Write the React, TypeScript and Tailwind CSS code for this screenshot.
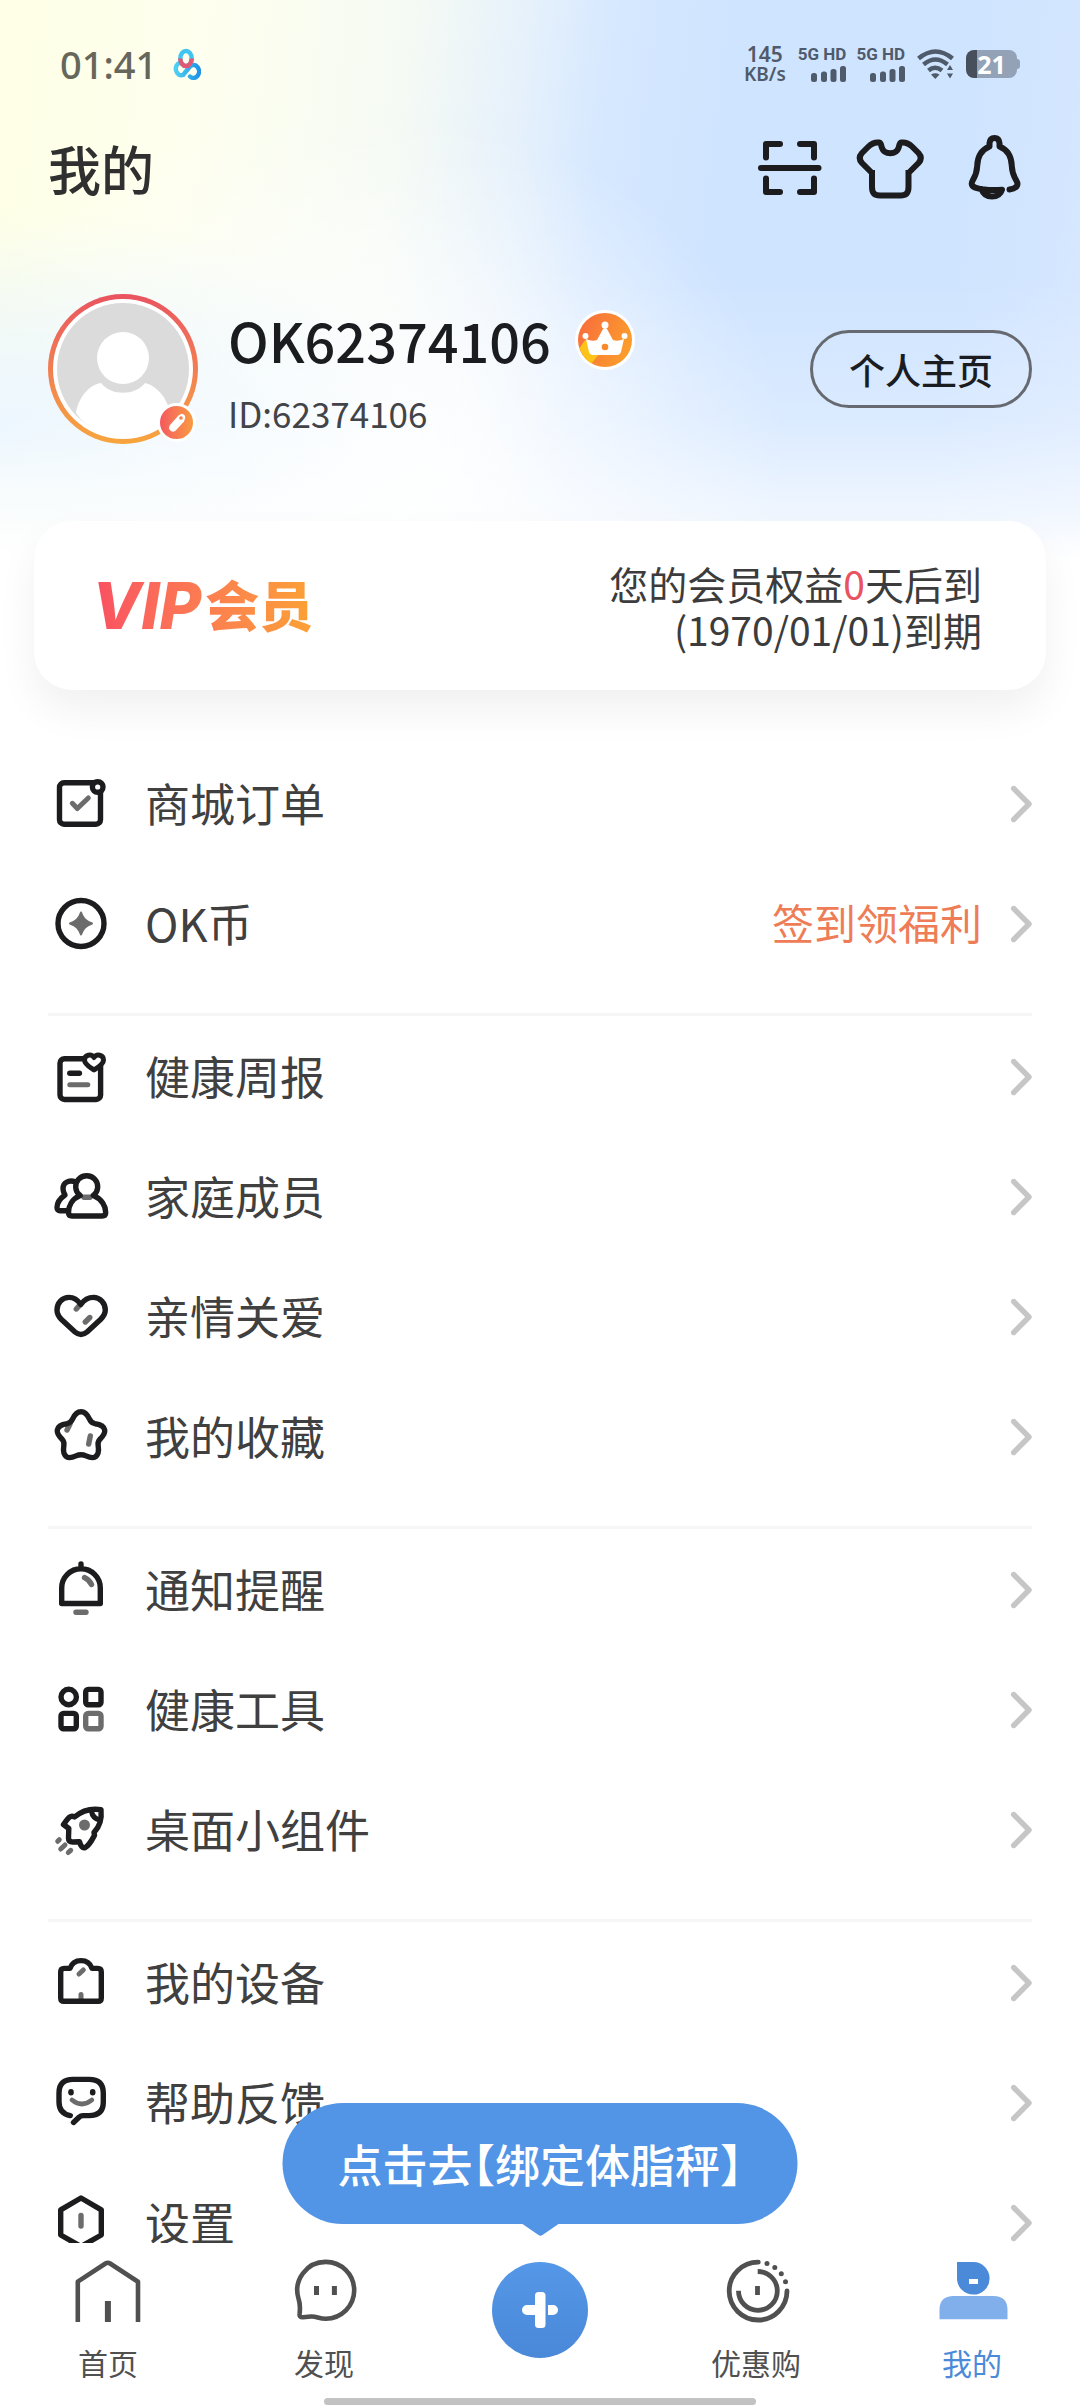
import type { ReactNode } from "react";

const DARK = "#1c1c1e";
const GREY = "#6c6c6c";

interface MenuItem {
  label: string;
  icon: ReactNode;
  extra?: string;
}

// Iconos del menú (lienzo de 66x66)
const MenuIcon = ({ children }: { children: ReactNode }) => (
  <svg
    viewBox="0 0 66 66"
    className="size-[66px] shrink-0"
    fill="none"
    stroke={DARK}
    strokeWidth="5.4"
    strokeLinecap="round"
    strokeLinejoin="round"
    aria-hidden="true"
  >
    {children}
  </svg>
);

const grupos: MenuItem[][] = [
  [
    {
      label: "商城订单",
      icon: (
        <MenuIcon>
          <rect x="11.5" y="11.8" width="41" height="41.4" rx="4.5" />
          <circle cx="49.7" cy="16" r="5.3" fill="#fff" />
          <path d="M24.3 32.3l5 5.2L40.3 27" stroke={GREY} strokeWidth="5" />
        </MenuIcon>
      ),
    },
    {
      label: "OK币",
      extra: "签到领福利",
      icon: (
        <MenuIcon>
          <circle cx="33" cy="32.5" r="23" />
          <path
            d="M33 21.5c2.2 6.2 4.8 8.8 11 11-6.2 2.2-8.8 4.8-11 11-2.2-6.2-4.8-8.8-11-11 6.2-2.2 8.8-4.8 11-11z"
            fill={GREY}
            stroke={GREY}
            strokeWidth="2"
          />
        </MenuIcon>
      ),
    },
  ],
  [
    {
      label: "健康周报",
      icon: (
        <MenuIcon>
          <rect x="12" y="14.7" width="40.6" height="40.8" rx="4.5" />
          <path
            d="M46 26c-3-2-9.5-5.5-9.5-10 0-5.5 7-6.5 9.5-2.5 2.5-4 9.5-3 9.5 2.5 0 4.5-6.5 8-9.5 10z"
            fill="#fff"
            strokeWidth="5"
          />
          <path d="M21.8 29.3h9.6" />
          <path d="M21.8 40.7h18" stroke={GREY} strokeWidth="5" />
        </MenuIcon>
      ),
    },
    {
      label: "家庭成员",
      icon: (
        <MenuIcon>
          <path d="M27.5 17.8C20 15.5 15 19 15 24.5c0 3 1 4.5 2 6.5-5 3.5-8 8.500-8 12.500 0 2 1.200 3.200 3 3.200h7" />
          <path d="M36 33.300h6" stroke={GREY} />
          <path d="M32.100 31.500a11 11 0 1 1 13.200 0C54 35 57.700 42.500 57.700 48.500q0 3.500-3.500 3.500H24q-3.500 0-3.500-3.500C20.500 42 24 35 32.100 31.500" />
        </MenuIcon>
      ),
    },
    {
      label: "亲情关爱",
      icon: (
        <MenuIcon>
          <path d="M28.300 25l4-4.500M37.300 38l4.500-4.500" stroke={GREY} />
          <path d="M32.800 20.500C29 15 24.500 13.400 21 13.400c-7 0-12 5.600-12 12.600 0 4 2 7 4.500 9.500L27 48q6 5 12 0l13.500-12.500C55 33 57.300 30 57.300 26c0-7-5.300-12.600-11.800-12.600-5.500 0-9.500 2.600-12.700 7.100z" />
        </MenuIcon>
      ),
    },
    {
      label: "我的收藏",
      icon: (
        <MenuIcon>
          <path d="M19 26l3-6M40.700 40l1.600-8" stroke={GREY} />
          <path d="M33 7.700c4.500 0 6.500 3 8.500 7.500 1.500 3.200 2.500 4 5.500 4.500 5 .6 9 2.500 9.700 6.300.7 3.500-2 6.500-5 9.500-1.800 2-2 3.500-1.500 6.500.8 5 .3 8.500-2.700 10.700-3 2-6 .8-9.500-.8-3.500-1.600-6.500-1.600-10 0-3.500 1.600-6.500 2.800-9.500.8-3-2.200-3.500-5.700-2.700-10.700.5-3 .3-4.500-1.500-6.500-3-3-5.700-6-5-9.500.7-3.800 4.700-5.700 9.700-6.300 3-.5 4-1.300 5.500-4.500 2-4.500 4-7.500 8.500-7.500z" />
        </MenuIcon>
      ),
    },
  ],
  [
    {
      label: "通知提醒",
      icon: (
        <MenuIcon>
          <path d="M13.700 46.500V31a19.300 19.300 0 0 1 38.600 0v15.500zM33 7v4" />
          <path d="M36.500 20.500q4.500 2 7 7M28 55.300h10" stroke={GREY} />
        </MenuIcon>
      ),
    },
    {
      label: "健康工具",
      icon: (
        <MenuIcon>
          <circle cx="20.700" cy="20" r="7.700" />
          <rect x="37.700" y="12.400" width="15.300" height="15.300" rx="2.500" />
          <rect x="13" y="36.400" width="15.300" height="15.300" rx="2.500" />
          <rect
            x="37.700"
            y="36.400"
            width="15.300"
            height="15.300"
            rx="2.500"
            stroke={GREY}
          />
        </MenuIcon>
      ),
    },
    {
      label: "桌面小组件",
      icon: (
        <MenuIcon>
          <path d="M53 12.600c-11-1.600-19 1-26.500 7.400-4-2.500-6 .5-11 7.500l5.300 4-.3 9.500q0 4 4 4l7-.3c1 4 3 6.800 5.500 6 5-3 7-8 9.500-12.500l-.5-2.700c6-6 8-13 7-22.900z" />
          <path d="M43.500 14.500q1 6.500 8 8.500" strokeWidth="5" />
          <circle cx="36.500" cy="28" r="5.500" fill={GREY} stroke="none" />
          <path
            d="M9.700 44.300l1.600-1.600M12.700 52l4.300-4M20.300 55.500l2.400-2.200"
            stroke={GREY}
            strokeWidth="5"
          />
        </MenuIcon>
      ),
    },
  ],
  [
    {
      label: "我的设备",
      icon: (
        <MenuIcon>
          <path d="M31 24l4.300-4M33 44.500v4" stroke={GREY} strokeWidth="5" />
          <path d="M12.700 22q0-3.600 3.600-3.600H22c2-5.900 6.500-7.800 11-7.800s9 1.900 11 7.800h5.700q3.600 0 3.600 3.600v26q0 3.300-3.300 3.300H16q-3.300 0-3.300-3.300z" />
        </MenuIcon>
      ),
    },
    {
      label: "帮助反馈",
      icon: (
        <MenuIcon>
          <path d="M25.500 52.500l5.500-5.300q1.800-1.600 4-1.600h6q14.300 0 14.300-13.600v-9q0-13.600-14.300-13.600H25Q11 9.400 11 23v9q0 11.500 11.300 13.600" />
          <g fill={DARK} stroke="none">
            <ellipse cx="23" cy="22.300" rx="2.800" ry="3.300" />
            <ellipse cx="44.700" cy="22.300" rx="2.800" ry="3.300" />
          </g>
          <path d="M24 30q9.800 8 19.800 0" stroke={GREY} strokeWidth="4.800" />
        </MenuIcon>
      ),
    },
    {
      label: "设置",
      icon: (
        <MenuIcon>
          <path d="M33 8l20.300 11.800V45L33 56.500 12.700 45V19.800z" />
          <path d="M33 25.500V36" stroke={GREY} />
        </MenuIcon>
      ),
    },
  ],
];

const Chevron = () => (
  <svg viewBox="0 0 24 40" className="h-10 w-6 shrink-0" aria-hidden="true">
    <path
      d="M5.700 4.500L21 20 5.700 35.500"
      fill="none"
      stroke="#c6c6c6"
      strokeWidth="5.400"
      strokeLinecap="round"
      strokeLinejoin="round"
    />
  </svg>
);

const Signal = () => (
  <div className="flex flex-col items-end gap-1 text-[17px] leading-4 font-bold">
    <span>5G HD</span>
    <svg viewBox="0 0 35 16" className="h-4 w-[35px]" fill="currentColor">
      <rect y="7" width="6" height="9" rx="2.500" />
      <rect x="10" y="5.500" width="6" height="10.500" rx="2.500" />
      <rect x="19.500" y="3" width="6" height="13" rx="2.500" />
      <rect x="29" width="6" height="16" rx="2.500" />
    </svg>
  </div>
);

const StatusBar = () => (
  <div className="flex h-32 items-center justify-between px-[60px]">
    <div className="flex items-center gap-[14px]">
      <span className="font-['Noto_Sans'] text-[38px] leading-10 font-medium text-[#66665a]">
        01:41
      </span>
      <svg viewBox="0 0 30 32" className="h-8 w-[30px]" fill="none">
        <defs>
          <linearGradient id="nube" x1="0" x2="1">
            <stop offset="0" stopColor="#4fd0f2" />
            <stop offset="1" stopColor="#1d94e8" />
          </linearGradient>
        </defs>
        <g strokeWidth="4.400">
          <path
            d="M9 14.500a5.500 6.500 0 1 0 3 12.500L19 18.500a5.500 6.500 0 1 1 0 10"
            stroke="url(#nube)"
            strokeLinecap="round"
            strokeLinejoin="round"
          />
          <ellipse cx="15" cy="10.500" rx="5.700" ry="7.500" stroke="#41c4f0" />
          <path d="M9.300 10.500a5.700 7.500 0 0 0 11.400 0" stroke="#e05a78" />
        </g>
      </svg>
    </div>

    <div className="flex items-center text-[#4f5b6b]">
      <div className="flex flex-col items-center font-['Noto_Sans'] font-semibold">
        <span className="text-[21px] leading-5">145</span>
        <span className="text-[19px] leading-5">KB/s</span>
      </div>
      <div className="ml-3 flex gap-[10px] font-['Roboto']">
        <Signal />
        <Signal />
      </div>
      <svg
        viewBox="0 0 38 30"
        className="ml-3 h-[30px] w-[38px]"
        fill="none"
        stroke="currentColor"
        strokeWidth="4.500"
      >
        <path d="M1.500 9.500q17-14 34 0M6.500 15.500q12-10 24 0M11.500 21.500q6.500-5.500 13.500 0" />
        <path
          d="M14 25.500q4.300-2.500 8.500 0L18.300 30zM30 21l3-5 3 5zM30 24.500l3 5 3-5z"
          fill="currentColor"
          stroke="none"
        />
      </svg>
      <div className="ml-[11px] flex items-center">
        <div className="flex h-7 w-[51px] items-center justify-center rounded-[8px] bg-[linear-gradient(90deg,#474e5c_22%,#93a2b6_22%)] font-['Noto_Sans'] text-[25px] leading-7 font-bold text-white">
          21
        </div>
        <div className="h-[10px] w-[3px] rounded-r-sm bg-[#93a2b6]" />
      </div>
    </div>
  </div>
);

const Header = () => (
  <header className="flex h-20 items-center justify-between pr-[53px] pl-12">
    <h1 className="text-[53px] leading-none font-medium text-[#303030]">
      我的
    </h1>
    <div className="flex items-center gap-7">
      <button type="button" aria-label="扫一扫">
        <svg
          viewBox="0 0 72 72"
          className="size-[72px]"
          fill="none"
          stroke={DARK}
          strokeWidth="6"
          strokeLinecap="round"
          strokeLinejoin="round"
        >
          <path d="M6 36h57.500M11 25.500V12h14M45 12h14v13.500M11 46.500V60h14M45 60h14V46.500" />
        </svg>
      </button>
      <button type="button" aria-label="皮肤">
        <svg
          viewBox="0 0 72 72"
          className="size-[72px]"
          fill="none"
          stroke={DARK}
          strokeWidth="6"
          strokeLinejoin="round"
        >
          <path d="M17 41L7 31q-4.500-5 0-10l6-6c4-4 7-5 11-4.500 2.500.5 2 3 3 5.500 2.500 7 14 7 16.500 0 1-2.500.5-5 3-5.500 4-.5 7 .5 11 4.500l6 6q4.500 5 0 10L53.500 41M17 38v17c0 6 2.500 8.500 8 8.500h20.500c5.500 0 8-2.500 8-8.500V38" />
        </svg>
      </button>
      <button type="button" aria-label="消息">
        <svg
          viewBox="0 0 72 72"
          className="size-[72px]"
          fill="none"
          stroke={DARK}
          strokeWidth="6"
          strokeLinejoin="round"
        >
          <path
            d="M54.500 57.500c7.500-1 9.500-4.500 6.800-9-3-5-4.300-8-4.500-14.500C56.500 24 53 18 44.500 14.500V11q-.5-5-5-5t-5 5v3.500C26 18 22.500 24 22.200 34c-.2 6.500-1.500 9.500-4.500 14.500-2 3.500-1 6 3.300 7.300 7 2.200 15 2.700 26 2-1 3.700-4.500 6.700-10 6.700-5.500 0-9-3-10.500-7.500"
            strokeLinecap="round"
          />
        </svg>
      </button>
    </div>
  </header>
);

const Profile = () => (
  <section className="mt-[86px] flex h-[150px] items-center px-12">
    <div className="relative size-[150px] shrink-0 rounded-full bg-linear-to-b from-[#e9535f] to-[#f7a53c] p-[5px]">
      <svg
        viewBox="0 0 140 140"
        className="size-full rounded-full bg-white"
        role="img"
        aria-label="头像"
      >
        <circle cx="70" cy="70" r="66" fill="#dbdbdb" />
        <path
          d="M23 114c2-14 12-28 25-30 10 13 34 13 44 0 13 3 23 17 25 30-12 16-30 24-47 24s-36-8-47-24z"
          fill="#fff"
        />
        <circle cx="70" cy="59" r="26" fill="#fff" />
      </svg>
      <button
        type="button"
        aria-label="编辑头像"
        className="absolute right-0.5 bottom-0.5 flex size-[39px] items-center justify-center rounded-full border-3 border-white bg-linear-to-r from-[#f4585f] to-[#f99a3d]"
      >
        <svg viewBox="0 0 24 24" className="size-6">
          <path
            d="M13.500 4.500l3-1.800q4 .3 3.700 4.300l-1.200 3.500-8.500 9.300q-3 2-5.500-.6-2-2.500.2-5.500z"
            fill="#fff"
          />
          <circle cx="16" cy="7" r="1.800" fill="#f78048" />
        </svg>
      </button>
    </div>

    <div className="ml-[30px] flex-1">
      <div className="flex items-center gap-6">
        <h2 className="text-[54px] leading-[70px] font-medium text-[#1b1c1f]">
          OK62374106
        </h2>
        <svg viewBox="0 0 60 60" className="size-[60px]" aria-hidden="true">
          <defs>
            <linearGradient id="corona" x1="0" y1="0" x2="1" y2="0.400">
              <stop offset="0" stopColor="#f8693f" />
              <stop offset="1" stopColor="#fb9b2c" />
            </linearGradient>
          </defs>
          <circle cx="30" cy="30" r="30" fill="#fff" />
          <circle cx="30" cy="30" r="27" fill="url(#corona)" />
          <path d="M4.500 38q4 11 12 15.500l8-10-14-14z" fill="#fcc318" />
          <g fill="#fff">
            <path d="M11 29q6 3 11 1l6-11q2-2 4 0l6 11q5 2 11-1l-3 13q-1 3-4 3H18q-3 0-4-3z" />
            <circle cx="30" cy="15" r="3.500" />
            <circle cx="10.500" cy="26" r="3" />
            <circle cx="49.500" cy="26" r="3" />
          </g>
          <circle cx="30" cy="37" r="3.300" fill="#f98a2c" />
        </svg>
      </div>
      <p className="mt-[18px] text-[35px] leading-10 text-[#424448]">
        ID:62374106
      </p>
    </div>

    <button
      type="button"
      className="h-[78px] rounded-full border-3 border-[#666a70] px-9 text-[36px] leading-none font-medium text-[#1b1c1f]"
    >
      个人主页
    </button>
  </section>
);

const VipCard = () => (
  <section className="mx-[34px] mt-[77px] flex h-[169px] items-center justify-between rounded-[38px] bg-white pr-16 pl-[58px] shadow-[0_20px_40px_rgba(0,0,0,0.06)]">
    <p className="flex items-center bg-linear-to-r from-[#f94f62] to-[#fba133] bg-clip-text font-black text-transparent">
      <span className="pr-1 font-['Inter'] text-[64px] leading-[64px] font-extrabold italic">
        VIP
      </span>
      <span className="pb-1 text-[54px] leading-[60px]">会员</span>
    </p>
    <p className="text-right text-[39px] leading-[46px] text-[#3c3c3c]">
      您的会员权益<span className="text-[#e9525f]">0</span>天后到
      <br />
      (1970/01/01)到期
    </p>
  </section>
);

const tabs = [
  {
    label: "首页",
    icon: (
      <g fill="none" stroke="#505050" strokeWidth="4.600">
        <path
          d="M5.800 66V25.700L33.500 7.500q2.300-1.500 4.600 0L66 25.700V66"
          strokeLinejoin="round"
        />
        <path d="M35.900 45v21" strokeWidth="6" />
      </g>
    ),
  },
  {
    label: "发现",
    icon: (
      <g fill="none" stroke="#505050" strokeWidth="4.600">
        <path d="M37.800 5.900a28.400 28.400 0 1 1 0 56.800C31 62.700 28 60 23 60.500l-8 .8q-4 .2-3.400-3.800c.9-7.500.4-10.500-1.100-15A28.400 28.400 0 0 1 37.800 5.900z" />
        <path d="M28.500 30v9M46.400 30v9" strokeWidth="5" />
      </g>
    ),
  },
  { label: "", icon: null },
  {
    label: "优惠购",
    icon: (
      <g fill="none" stroke="#505050" strokeWidth="4.800">
        <path d="M38.300 6.200A28.900 28.900 0 1 0 67 35" strokeLinecap="round" />
        <path d="M37.700 15.500a19.400 19.400 0 1 1-19.200 19.200M37.500 30v9" />
        <g fill="#505050" stroke="none">
          <circle cx="47" cy="7.500" r="2.500" />
          <circle cx="54.800" cy="11.400" r="2.500" />
          <circle cx="61.300" cy="17.800" r="2.500" />
          <circle cx="65.500" cy="25.800" r="2.500" />
        </g>
      </g>
    ),
  },
  {
    label: "我的",
    activo: true,
    icon: (
      <g>
        <path d="M21 6h16.500a16.300 16.300 0 1 1-16.500 16.300z" fill="#4b8ad9" />
        <path d="M33 23h9v5h-9z" fill="#fff" />
        <path
          d="M3.500 63.300V54q0-14 14-14h40q14 0 14 14v9.300z"
          fill="#80afec"
        />
      </g>
    ),
  },
];

const TabBar = () => (
  <nav className="relative shrink-0 bg-white">
    {/* Aviso flotante sobre el botón central */}
    <button
      type="button"
      className="absolute bottom-full left-1/2 mb-[19px] h-[121px] w-[515px] -translate-x-1/2 rounded-full bg-[#5294e6] text-[45px] leading-none font-medium text-white"
    >
      点击去<span className="[font-feature-settings:'halt']">【</span>
      绑定体脂秤<span className="[font-feature-settings:'halt']">】</span>
      <svg
        viewBox="0 0 36 12"
        className="absolute top-full left-1/2 h-3 w-9 -translate-x-1/2"
        aria-hidden="true"
      >
        <path d="M0 0h36L20 11q-2 1.500-4 0z" fill="#5294e6" />
      </svg>
    </button>

    <div className="grid h-[155px] grid-cols-5 pt-[13px]">
      {tabs.map((tab) =>
        tab.label ? (
          <a
            key={tab.label}
            href="#"
            className={`flex flex-col items-center text-[30px] leading-9 ${
              tab.activo ? "text-[#4b8ad9]" : "text-[#505050]"
            }`}
          >
            <svg viewBox="0 0 72 72" className="size-[72px]">
              {tab.icon}
            </svg>
            <span className="mt-4">{tab.label}</span>
          </a>
        ) : (
          <button
            key="agregar"
            type="button"
            aria-label="添加"
            className="mt-1.5 flex size-24 items-center justify-center justify-self-center rounded-full bg-linear-to-b from-[#5597e8] to-[#4a88d8]"
          >
            <svg viewBox="0 0 36 36" className="size-9" fill="#fff">
              <rect x="13" width="10.500" height="36" rx="3.500" />
              <path d="M13 13H5a5 5 0 0 0 0 10h8zM26 13h5a5 5 0 0 1 0 10h-5z" />
            </svg>
          </button>
        ),
      )}
    </div>
    <div className="mx-auto mb-[3px] h-[7px] w-2/5 rounded-full bg-[#c2c2c2]" />
  </nav>
);

const App = () => {
  return (
    <div className="flex h-screen flex-col overflow-hidden bg-white font-['Noto_Sans_CJK_SC',sans-serif]">
      <main className="min-h-0 flex-1 overflow-hidden bg-[linear-gradient(180deg,transparent_280px,rgba(255,255,255,0.25)_420px,rgba(255,255,255,0.65)_510px,#fff_560px),radial-gradient(460px_220px_at_0_430px,#e6f4ff,transparent),radial-gradient(440px_340px_at_32%_450px,#fff_10%,rgba(255,255,255,0)),linear-gradient(97deg,#ffffe6_0%,#feffee_18%,#f5faf4_36%,#e6f1fb_46%,#d6e8ff_54%,#cfe4ff_64%,#cfe4ff_86%,#d8e8ff_100%)] bg-[length:100%_560px] bg-no-repeat">
        <StatusBar />
        <Header />
        <Profile />
        <VipCard />

        {/* Menú por grupos */}
        <div className="mt-[54px] px-12">
          {grupos.map((grupo, i) => (
            <ul
              key={i}
              className="border-b-3 border-[#f6f6f6] pb-[29px] not-first:pt-px last:border-b-0"
            >
              {grupo.map((item) => (
                <li key={item.label}>
                  <a href="#" className="flex h-[120px] items-center">
                    {item.icon}
                    <span className="ml-[31px] flex-1 pb-1 text-[45px] leading-none text-[#404040]">
                      {item.label}
                    </span>
                    {item.extra && (
                      <span className="mr-[26px] pb-1 text-[42px] leading-none text-[#ee7d57]">
                        {item.extra}
                      </span>
                    )}
                    <Chevron />
                  </a>
                </li>
              ))}
            </ul>
          ))}
        </div>
      </main>
      <TabBar />
    </div>
  );
};

export default App;
